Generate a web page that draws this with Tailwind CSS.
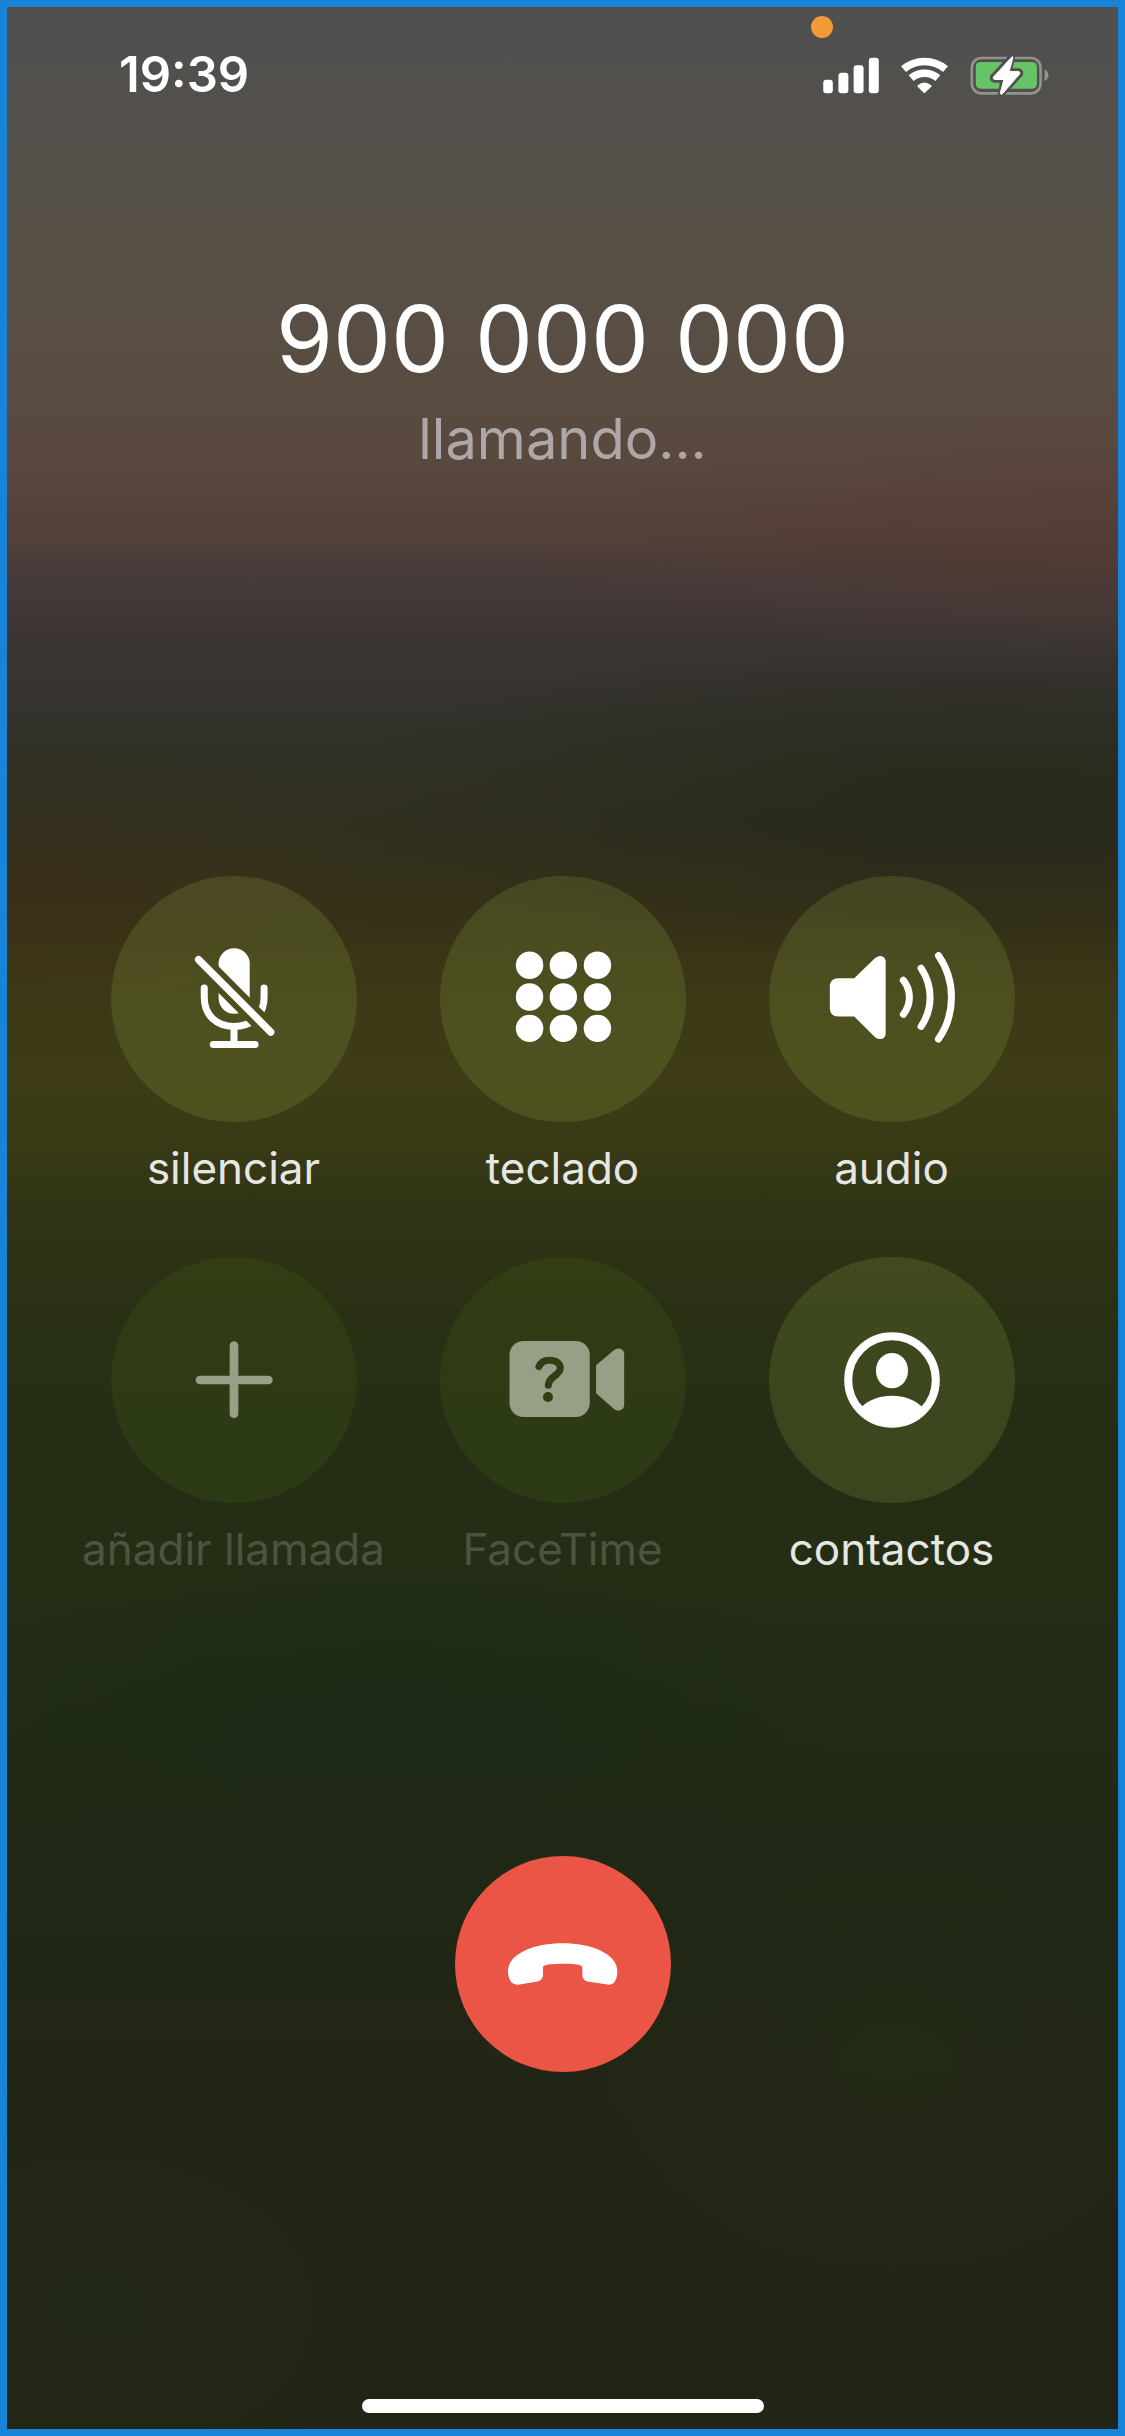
<!DOCTYPE html>
<html lang="es">
<head>
<meta charset="utf-8">
<meta name="viewport" content="width=device-width, initial-scale=1">
<title>Llamada</title>
<script src="https://cdn.jsdelivr.net/npm/@tailwindcss/browser@4"></script>
</head>
<body class="bg-[#1784da] font-['Inter','Liberation_Sans',sans-serif] text-white">
<div class="flex min-h-screen flex-col items-center border-[7px] border-[#1784da] bg-[radial-gradient(60%_7%_at_88%_33%,#25261ab3,#25261a00),radial-gradient(35%_6%_at_0%_36%,#42301a66,#42301a00),radial-gradient(55%_5%_at_100%_22%,#57392f80,#57392f00),radial-gradient(40%_8%_at_35%_71%,#1a281680,#1a281600),radial-gradient(30%_10%_at_80%_85%,#242d1699,#242d1600),radial-gradient(25%_8%_at_8%_95%,#222b1699,#222b1600),linear-gradient(180deg,#504f4f_0%,#53504b_5%,#575046_10%,#594d42_15%,#59483e_19%,#51403a_22%,#443939_24%,#393431_27%,#32322a_30%,#31301f_34%,#363118_37%,#3b3716_40%,#3e3d17_44%,#383a15_47%,#303415_50%,#293014_54%,#252e15_59%,#242e15_65%,#212b15_71%,#202715_79%,#222515_87%,#222515_100%)]">

  <header class="flex w-full items-center justify-between pt-12 pr-[69px] pl-28">
    <time class="text-[49px] leading-[40px] font-semibold">19:39</time>
    <div class="flex items-center gap-[21px]">
      <div class="relative">
        <span class="absolute -top-10 -left-3 size-[22px] rounded-full bg-[#f19a38]"></span>
        <svg class="h-[39px] w-14" viewBox="69 165 168 118" fill="#fff" aria-label="Cobertura"><rect x="69" y="237" width="29" height="41" rx="9"/><rect x="115" y="216" width="30" height="62" rx="9"/><rect x="161" y="193" width="30" height="85" rx="9"/><rect x="207" y="170" width="30" height="108" rx="9"/></svg>
      </div>
      <svg class="h-[39px] w-[49px]" viewBox="300 165 147 118" fill="none" stroke="#fff" stroke-width="23" aria-label="Wi-Fi"><path d="M310 205A98 98 0 0 1 437 205M333 232A62.500 62.500 0 0 1 414 232"/><path d="M373 274L355 256Q373 240 392 256Z" fill="#fff" stroke-width="6" stroke-linejoin="round"/></svg>
      <svg class="h-[39px] w-[79px]" viewBox="510 165 238 118" aria-label="Batería cargando"><rect x="515" y="171" width="208" height="107" rx="29" fill="none" stroke="#949290" stroke-width="8"/><path d="M735 206Q747 212 747 223.500Q747 235 735 241Z" fill="#949290"/><rect x="527" y="183" width="185" height="81" rx="14" fill="#65c466"/><path d="M636 168L580 229Q578 235 584 236H612L603 281L660 219Q662 213 656 212H626Z" fill="#52504c" stroke="#52504c" stroke-width="20" stroke-linejoin="round"/><path d="M636 168L580 229Q578 235 584 236H612L601 278Q603 284 608 279L660 219Q662 213 656 212H628L639 171Q640 165 636 168Z" fill="#fff" stroke="#fff" stroke-width="3" stroke-linejoin="round"/></svg>
    </div>
  </header>

  <h1 class="mt-[194px] text-[92px] leading-[100px]">900 000 000</h1>
  <p class="mt-3.5 text-[56px] leading-[72px] text-[#aea7a8]">llamando...</p>

  <div class="mt-[401px] grid w-full max-w-[987px] grid-cols-3 gap-y-[61px] text-[44px] leading-[56px] whitespace-nowrap">
    <button class="flex flex-col items-center gap-[18px] text-[#e6e6e2]">
      <span class="size-[246px] rounded-full bg-[#96aa46]/20">
        <svg class="size-full" viewBox="35 49 736 736" fill="none" stroke="#fff" stroke-width="21" stroke-linecap="round" aria-hidden="true"><mask id="slash" maskUnits="userSpaceOnUse" x="35" y="49" width="736" height="736"><rect x="35" y="49" width="736" height="736" fill="#fff" stroke="none"/><path d="M280 282L540 543" stroke="#000" stroke-width="56"/></mask><g mask="url(#slash)"><rect x="357" y="265" width="93" height="196" rx="46" fill="#fff" stroke="none"/><path d="M314 384V412C314 465 350 499 403 499C456 499 493 465 493 412V384"/></g><path d="M403 500V550" stroke-linecap="butt"/><path d="M341 553H466"/><path d="M297 299L513 516" stroke-width="22"/></svg>
      </span>
      silenciar
    </button>
    <button class="flex flex-col items-center gap-[18px] text-[#e6e6e2]">
      <span class="size-[246px] rounded-full bg-[#96aa46]/20">
        <svg class="size-full" viewBox="31 49 736 736" fill="#fff" aria-hidden="true"><circle cx="299" cy="316" r="41"/><circle cx="400" cy="316" r="41"/><circle cx="502" cy="316" r="41"/><circle cx="299" cy="411" r="41"/><circle cx="400" cy="411" r="41"/><circle cx="502" cy="411" r="41"/><circle cx="299" cy="505" r="41"/><circle cx="400" cy="505" r="41"/><circle cx="502" cy="505" r="41"/></svg>
      </span>
      teclado
    </button>
    <button class="flex flex-col items-center gap-[18px] text-[#e6e6e2]">
      <span class="size-[246px] rounded-full bg-[#96aa46]/20">
        <svg class="size-full" viewBox="58 49 736 736" fill="none" stroke="#fff" stroke-width="21" stroke-linecap="round" aria-hidden="true"><path fill="#fff" stroke="none" d="M266 355H313L374 296C380 291 385 288 390 288C400 288 407 295 407 305V520C407 530 400 537 390 537C384 537 379 534 374 530L313 469H266C249 469 240 460 240 443V381C240 364 249 355 266 355Z"/><path d="M460 361A81 81 0 0 1 460 463M513 325A154 154 0 0 1 513 499M565 287A220 220 0 0 1 565 537"/></svg>
      </span>
      audio
    </button>
    <button disabled class="flex flex-col items-center gap-[18px] text-[#4c5440]">
      <span class="size-[246px] rounded-full bg-[#55801a]/15">
        <svg class="size-full" viewBox="125 52 736 736" fill="none" stroke="#979f87" stroke-width="26" stroke-linecap="round" aria-hidden="true"><path d="M391 420H596M493 317V521"/></svg>
      </span>
      añadir llamada
    </button>
    <button disabled class="flex flex-col items-center gap-[18px] text-[#4c5440]">
      <span class="size-[246px] rounded-full bg-[#55801a]/15">
        <svg class="size-full" viewBox="31 52 736 736" fill="#979f87" aria-hidden="true"><rect x="239" y="303" width="240" height="228" rx="42"/><path d="M498 376L550 332C556 328 560 326 565 326C576 326 582 333 582 344V493C582 504 575 511 565 511C559 511 555 509 550 505L498 460Z"/><path d="M327 380C333 366 343 361 358 361C378 361 391 370 391 385C391 407 355 409 355 436" fill="none" stroke="#2f3e13" stroke-width="21" stroke-linecap="round"/><circle cx="354" cy="471" r="15" fill="#2f3e13"/></svg>
      </span>
      FaceTime
    </button>
    <button class="flex flex-col items-center gap-[18px] text-[#e6e6e2]">
      <span class="size-[246px] rounded-full bg-[#96aa46]/20">
        <svg class="size-full" viewBox="58 52 736 736" fill="#fff" aria-hidden="true"><circle cx="426" cy="420" r="131" fill="none" stroke="#fff" stroke-width="24"/><ellipse cx="426" cy="392" rx="48" ry="53"/><path d="M336 499C360 478 390 467 426 467C462 467 491 478 515 499L520 508A130 130 0 0 1 332 508Z"/></svg>
      </span>
      contactos
    </button>
  </div>

  <button class="mt-[279px] size-[216px] rounded-full bg-[#eb5545]" aria-label="Colgar">
    <svg class="size-full" viewBox="75 78 648 648" fill="#fff" aria-hidden="true"><path d="M537 464L477 455C463 453 457 445 457 434V413C457 405 450 402 398 401C346 402 339 405 339 413V434C339 445 331 453 318 455L264 464C245 466 234 448 234 424C234 370 315 340 398 340C481 340 562 370 562 424C562 448 552 466 537 464Z"/></svg>
  </button>

  <div class="mt-auto mb-4 h-3.5 w-[402px] rounded-full bg-white"></div>
</div>
</body>
</html>
